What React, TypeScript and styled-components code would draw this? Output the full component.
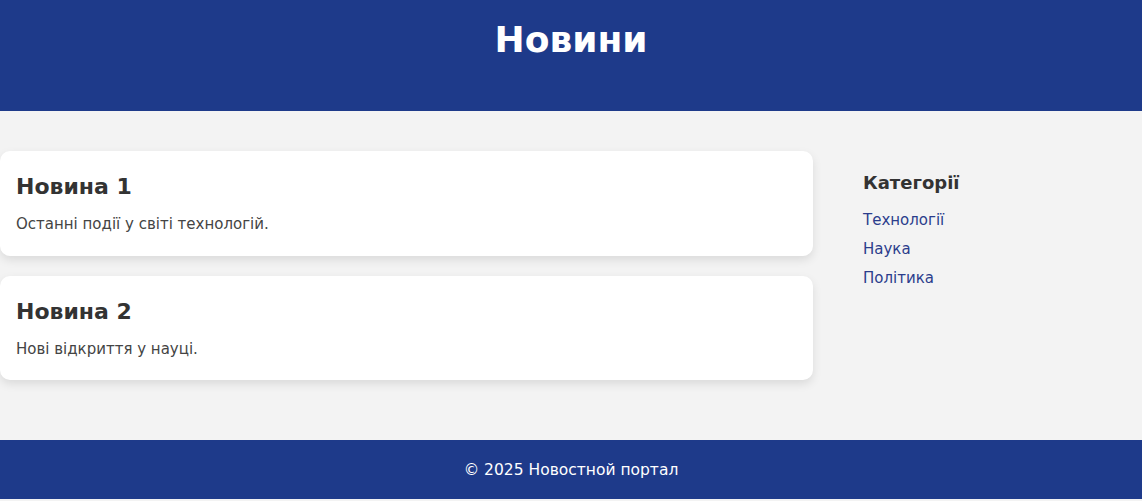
import React from "react";
import styled, { createGlobalStyle } from "styled-components";

const Global = createGlobalStyle`
  html, body { margin: 0; padding: 0; background: #f3f3f3; }
  body { font-family: "DejaVu Sans", "Noto Sans", sans-serif; color: #333; }
  * { box-sizing: border-box; }
`;

const Header = styled.header`
  background: #1e3a8a;
  height: 111px;
  display: flex;
  justify-content: center;
  padding-top: 17px;
`;

const Title = styled.h1`
  margin: 0;
  color: #fff;
  font-size: 36px;
  line-height: 46px;
  font-weight: 700;
`;

const Main = styled.main`
  display: flex;
  gap: 30px;
  padding: 40px 0 60px;
`;

const Articles = styled.section`
  width: 813px;
  display: flex;
  flex-direction: column;
  gap: 20px;
`;

const Card = styled.article`
  background: #fff;
  border-radius: 10px;
  box-shadow: 0 4px 10px rgba(0, 0, 0, 0.1);
  padding: 22px 16px 20px;
  height: 104.5px;
`;

const CardTitle = styled.h2`
  margin: 0 0 13px;
  font-size: 22px;
  line-height: 28px;
  font-weight: 700;
  color: #333;
`;

const CardText = styled.p`
  margin: 0;
  font-size: 15px;
  line-height: 20px;
  color: #444;
`;

const Sidebar = styled.aside`
  flex: 1;
  padding: 20px;
`;

const SideTitle = styled.h3`
  margin: 0 0 15px;
  font-size: 18px;
  line-height: 24px;
  font-weight: 700;
  color: #333;
`;

const LinkList = styled.ul`
  list-style: none;
  margin: 0;
  padding: 0;
  display: flex;
  flex-direction: column;
  gap: 9px;
`;

const Link = styled.a`
  display: block;
  font-size: 15px;
  line-height: 20px;
  color: #2b3d8c;
  text-decoration: none;
`;

const Footer = styled.footer`
  background: #1e3a8a;
  color: #fff;
  height: 59px;
  display: flex;
  align-items: center;
  justify-content: center;
  font-size: 15.5px;
`;

const news = [
  { title: "Новина 1", text: "Останні події у світі технологій." },
  { title: "Новина 2", text: "Нові відкриття у науці." },
];

const cats = ["Технології", "Наука", "Політика"];

export default function App() {
  return (
    <>
      <Global />
      <Header>
        <Title>Новини</Title>
      </Header>
      <Main>
        <Articles>
          {news.map((n) => (
            <Card key={n.title}>
              <CardTitle>{n.title}</CardTitle>
              <CardText>{n.text}</CardText>
            </Card>
          ))}
        </Articles>
        <Sidebar>
          <SideTitle>Категорії</SideTitle>
          <LinkList>
            {cats.map((c) => (
              <li key={c}>
                <Link href="#">{c}</Link>
              </li>
            ))}
          </LinkList>
        </Sidebar>
      </Main>
      <Footer>© 2025 Новостной портал</Footer>
    </>
  );
}
